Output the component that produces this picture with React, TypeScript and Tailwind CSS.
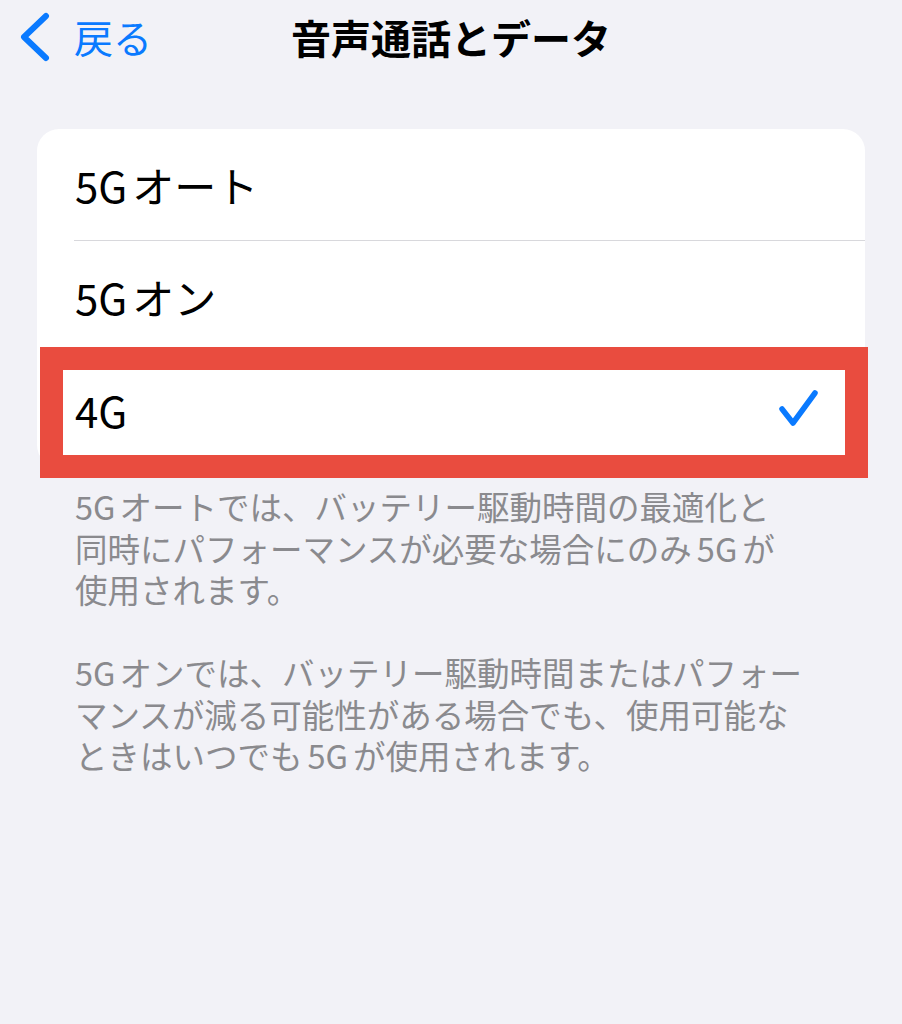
import React from "react";

function Chevron() {
  return (
    <svg width="34" height="50" viewBox="0 0 34 50" fill="none">
      <path d="M27 4 L5 25 L27 46" stroke="#0a7aff" strokeWidth="6" strokeLinecap="round" strokeLinejoin="round" />
    </svg>
  );
}

function Check() {
  return (
    <svg width="44" height="42" viewBox="0 0 44 42" fill="none">
      <path d="M5 20 L16 34 L38 4" stroke="#0a7aff" strokeWidth="5.5" strokeLinecap="round" strokeLinejoin="round" />
    </svg>
  );
}

export default function App() {
  return (
    <div className="w-[902px] h-[1024px] bg-[#f2f2f7] text-black font-['Noto_Sans_CJK_JP','Noto_Sans',sans-serif] overflow-hidden">
      {/* Header */}
      <div className="grid grid-cols-[1fr_auto_1fr] items-center h-[73px]">
        <div className="flex items-center pl-[19px]">
          <Chevron />
          <span className="ml-[21px] text-[39px] leading-none text-[#0a7aff]">戻る</span>
        </div>
        <div className="text-[40px] leading-none font-bold">音声通話とデータ</div>
        <div />
      </div>

      {/* Card */}
      <div className="mt-[56px] ml-[37px] w-[828px] rounded-[22px] bg-white">
        <div className="h-[112px] pl-[37px] flex">
          <div className="flex-1 flex items-center pl-[1px] border-b border-[#d8d8dc] text-[42px] leading-none">
            <span className="mr-[5px]">5G</span>オート
          </div>
        </div>
        <div className="h-[112px] pl-[38px] flex items-center text-[42px] leading-none">
          <span className="mr-[5px]">5G</span>オン
        </div>
        <div className="relative h-[114px] pl-[38px] pr-[44px] flex items-center justify-between text-[42px] leading-none">
          <span>4G</span>
          <Check />
          <div className="absolute -top-[6px] -bottom-[11px] left-[3px] -right-[3px] border-[23px] border-[#e94c3f] pointer-events-none" />
        </div>
      </div>

      {/* Footer */}
      <div className="mt-[18px] pl-[75px] text-[32.5px] leading-[41.5px] text-[#8a8a8e] whitespace-nowrap">
        <p>
          <span className="mr-[4px]">5G</span>オートでは、バッテリー駆動時間の最適化と
          <br />
          同時にパフォーマンスが必要な場合にのみ<span className="mx-[5px]">5G</span>が
          <br />
          使用されます。
        </p>
        <p className="mt-[41.5px]">
          <span className="mr-[4px]">5G</span>オンでは、バッテリー駆動時間またはパフォー
          <br />
          マンスが減る可能性がある場合でも、使用可能な
          <br />
          ときはいつでも<span className="mx-[5px]">5G</span>が使用されます。
        </p>
      </div>
    </div>
  );
}
